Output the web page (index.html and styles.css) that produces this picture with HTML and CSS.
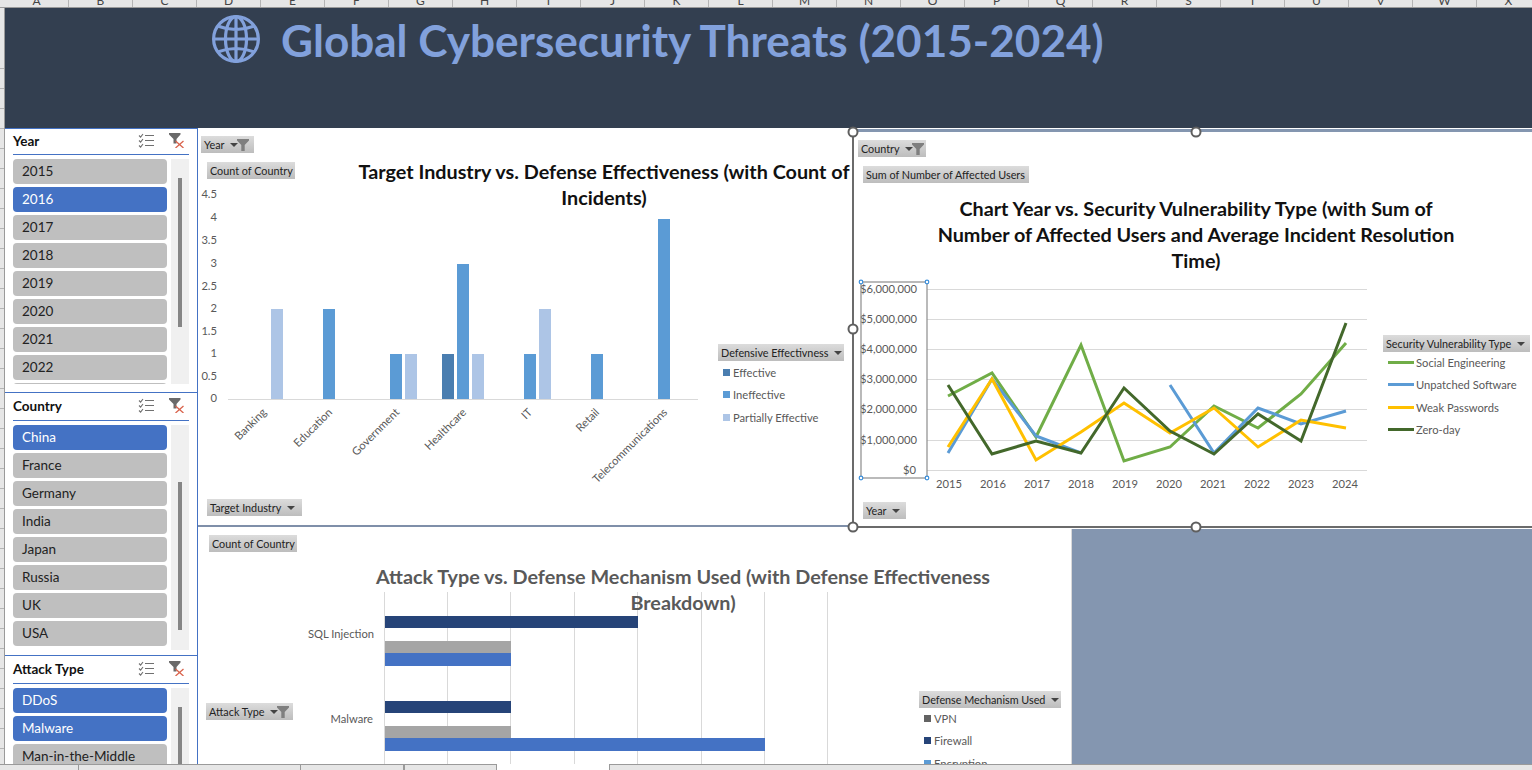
FILE: index.html
```html
<!DOCTYPE html>
<html lang="en">
<head>
    <meta charset="UTF-8">
    <meta name="viewport" content="width=device-width, initial-scale=1.0">
    <title>Global Cybersecurity Threats (2015-2024)</title>
    <link rel="stylesheet" href="styles.css">
</head>
<body>
    <svg class="defs" width="0" height="0">
        <symbol id="ic-multi" viewBox="0 0 16 15">
            <path d="M1 2.500l1.600 1.600L5 1M1 7.500l1.600 1.600L5 6M1 12.500l1.600 1.600L5 11" fill="none" stroke="#707070" stroke-width="1.100"/>
            <path d="M7 2.500h9M7 7.500h9M7 12.500h9" fill="none" stroke="#707070" stroke-width="1"/>
        </symbol>
        <symbol id="ic-clear" viewBox="0 0 16 15">
            <path d="M0 0h11.500v1.500L7.500 6v4.500H4.500V6L0 1.500z" fill="#6a6a6a"/>
            <path d="M6.500 8l8 7M14.500 8l-8 7" fill="none" stroke="#d9634c" stroke-width="1.300"/>
        </symbol>
        <symbol id="ic-funnel" viewBox="0 0 12 12">
            <path d="M0 0h12v1.500L7.700 6v6H4.300V6L0 1.500z" fill="#7f7f7f"/>
        </symbol>
    </svg>

    <div class="col-head">
        <span>A</span><span>B</span><span>C</span><span>D</span><span>E</span><span>F</span>
        <span>G</span><span>H</span><span>I</span><span>J</span><span>K</span><span>L</span>
        <span>M</span><span>N</span><span>O</span><span>P</span><span>Q</span><span>R</span>
        <span>S</span><span>T</span><span>U</span><span>V</span><span>W</span><span>X</span>
    </div>

    <div class="sheet">
        <div class="row-head">
            <div class="row-first"></div>
            <div class="row-rest"></div>
        </div>
        <div class="main">
            <header class="banner">
                <svg class="globe" viewBox="0 0 48 48" width="48" height="48">
                    <g fill="none" stroke="#82a1dc" stroke-width="3.200">
                        <circle cx="24" cy="24" r="22.400"/>
                        <ellipse cx="24" cy="24" rx="10.500" ry="22.400"/>
                        <path d="M24 1.500v45M1.500 24h45M5.500 11Q24 18 42.500 11M5.500 37Q24 30 42.500 37"/>
                    </g>
                </svg>
                <h1>Global Cybersecurity Threats (2015-2024)</h1>
            </header>

            <div class="dash">
                <aside class="sidebar">
                    <section class="slicer slicer-year">
                        <div class="slicer-head">
                            <h2>Year</h2>
                            <svg class="ic"><use href="#ic-multi"/></svg>
                            <svg class="ic"><use href="#ic-clear"/></svg>
                        </div>
                        <div class="slicer-body">
                            <ul class="items">
                                <li>2015</li>
                                <li class="on">2016</li>
                                <li>2017</li>
                                <li>2018</li>
                                <li>2019</li>
                                <li>2020</li>
                                <li>2021</li>
                                <li>2022</li>
                                <li></li>
                            </ul>
                            <div class="track"><div class="thumb thumb-year"></div></div>
                        </div>
                    </section>
                    <section class="slicer slicer-country">
                        <div class="slicer-head head-tall">
                            <h2>Country</h2>
                            <svg class="ic"><use href="#ic-multi"/></svg>
                            <svg class="ic"><use href="#ic-clear"/></svg>
                        </div>
                        <div class="slicer-body">
                            <ul class="items">
                                <li class="on">China</li>
                                <li>France</li>
                                <li>Germany</li>
                                <li>India</li>
                                <li>Japan</li>
                                <li>Russia</li>
                                <li>UK</li>
                                <li>USA</li>
                            </ul>
                            <div class="track"><div class="thumb thumb-country"></div></div>
                        </div>
                    </section>
                    <section class="slicer slicer-last">
                        <div class="slicer-head head-tall">
                            <h2>Attack Type</h2>
                            <svg class="ic"><use href="#ic-multi"/></svg>
                            <svg class="ic"><use href="#ic-clear"/></svg>
                        </div>
                        <div class="slicer-body">
                            <ul class="items">
                                <li class="on">DDoS</li>
                                <li class="on">Malware</li>
                                <li>Man-in-the-Middle</li>
                            </ul>
                            <div class="track"><div class="thumb thumb-attack"></div></div>
                        </div>
                    </section>
                </aside>

                <div class="charts">
                    <div class="charts-top">
                        <!-- bar chart -->
                        <section class="chart chart-industry">
                            <svg class="plot" viewBox="198 128 655 399" width="655" height="399">
                                <g class="lbl" text-anchor="end">
                                    <text x="217" y="198">4.5</text>
                                    <text x="217" y="221">4</text>
                                    <text x="217" y="244">3.5</text>
                                    <text x="217" y="267">3</text>
                                    <text x="217" y="290">2.5</text>
                                    <text x="217" y="312">2</text>
                                    <text x="217" y="335">1.5</text>
                                    <text x="217" y="357">1</text>
                                    <text x="217" y="380">0.5</text>
                                    <text x="217" y="402">0</text>
                                </g>
                                <path d="M228 399.500h470" stroke="#d9d9d9"/>
                                <g fill="#adc5e6">
                                    <rect x="271" y="309" width="12" height="90"/>
                                    <rect x="405" y="354" width="12" height="45"/>
                                    <rect x="472" y="354" width="12" height="45"/>
                                    <rect x="539" y="309" width="12" height="90"/>
                                </g>
                                <g fill="#5b9bd5">
                                    <rect x="323" y="309" width="12" height="90"/>
                                    <rect x="390" y="354" width="12" height="45"/>
                                    <rect x="457" y="264" width="12" height="135"/>
                                    <rect x="524" y="354" width="12" height="45"/>
                                    <rect x="591" y="354" width="12" height="45"/>
                                    <rect x="658" y="219" width="12" height="180"/>
                                </g>
                                <rect x="442" y="354" width="12" height="45" fill="#4a7eb0"/>
                                <g class="lbl" text-anchor="end">
                                    <text transform="translate(267 413) rotate(-45)">Banking</text>
                                    <text transform="translate(333 413) rotate(-45)">Education</text>
                                    <text transform="translate(400 413) rotate(-45)">Government</text>
                                    <text transform="translate(467 413) rotate(-45)">Healthcare</text>
                                    <text transform="translate(533 413) rotate(-45)">IT</text>
                                    <text transform="translate(600 413) rotate(-45)">Retail</text>
                                    <text transform="translate(668 413) rotate(-45)">Telecommunications</text>
                                </g>
                            </svg>
                            <h3 class="chart-title title-industry">Target Industry vs. Defense Effectiveness (with Count of<br>Incidents)</h3>
                            <div class="pivot pv-year1">Year <span class="caret"></span><svg class="funnel"><use href="#ic-funnel"/></svg></div>
                            <div class="pivot pv-count1">Count of Country</div>
                            <div class="pivot pv-industry">Target Industry <span class="caret"></span></div>
                            <div class="pivot pv-effect">Defensive Effectivness <span class="caret"></span></div>
                            <ul class="legend legend-effect">
                                <li><i class="swatch c-effective"></i>Effective</li>
                                <li><i class="swatch c-ineffective"></i>Ineffective</li>
                                <li><i class="swatch c-partial"></i>Partially Effective</li>
                            </ul>
                        </section>

                        <!-- line chart -->
                        <section class="chart chart-year">
                            <svg class="plot" viewBox="853 128 679 399" width="679" height="399">
                                <path d="M927 289.500h440M927 319.500h440M927 349.500h440M927 379.500h440M927 409.500h440M927 440.500h440M927 470.500h440" stroke="#d9d9d9"/>
                                <g class="lbl" text-anchor="end">
                                    <text x="917" y="293">$6,000,000</text>
                                    <text x="917" y="323">$5,000,000</text>
                                    <text x="917" y="353">$4,000,000</text>
                                    <text x="917" y="383">$3,000,000</text>
                                    <text x="917" y="413">$2,000,000</text>
                                    <text x="917" y="444">$1,000,000</text>
                                    <text x="916" y="474">$0</text>
                                </g>
                                <g class="lbl" text-anchor="middle">
                                    <text x="949" y="488">2015</text>
                                    <text x="993" y="488">2016</text>
                                    <text x="1037" y="488">2017</text>
                                    <text x="1081" y="488">2018</text>
                                    <text x="1125" y="488">2019</text>
                                    <text x="1169" y="488">2020</text>
                                    <text x="1213" y="488">2021</text>
                                    <text x="1257" y="488">2022</text>
                                    <text x="1301" y="488">2023</text>
                                    <text x="1345" y="488">2024</text>
                                </g>
                                <g fill="none" stroke-width="3">
                                    <polyline stroke="#70ad47" points="948,396 992,373 1036,437 1081,345 1124,461 1170,447 1214,406 1258,428 1301,394 1346,343"/>
                                    <polyline stroke="#5b9bd5" points="948,453 992,379 1036,436 1081,453"/>
                                    <polyline stroke="#5b9bd5" points="1170,385 1214,453 1258,408 1301,424 1346,411"/>
                                    <polyline stroke="#ffc000" points="948,447 992,379 1036,460 1081,432 1124,403 1170,433 1214,408 1258,447 1301,420 1346,428"/>
                                    <polyline stroke="#43682b" points="948,385 992,454 1036,441 1081,453 1124,388 1170,431 1214,454 1258,414 1301,441 1346,323"/>
                                </g>
                                <rect x="861" y="282" width="66" height="196" fill="none" stroke="#8c8c8c" stroke-width="1.200"/>
                                <g fill="#fff" stroke="#3b8fdc" stroke-width="1.200">
                                    <circle cx="861" cy="282" r="1.800"/>
                                    <circle cx="927" cy="282" r="1.800"/>
                                    <circle cx="861" cy="478" r="1.800"/>
                                    <circle cx="927" cy="478" r="1.800"/>
                                </g>
                            </svg>
                            <h3 class="chart-title title-year">Chart Year vs. Security Vulnerability Type (with Sum of<br>Number of Affected Users and Average Incident Resolution<br>Time)</h3>
                            <div class="pivot pv-country">Country <span class="caret"></span><svg class="funnel"><use href="#ic-funnel"/></svg></div>
                            <div class="pivot pv-sum">Sum of Number of Affected Users</div>
                            <div class="pivot pv-vuln">Security Vulnerability Type <span class="caret"></span></div>
                            <div class="pivot pv-year2">Year <span class="caret"></span></div>
                            <ul class="legend legend-vuln">
                                <li><i class="dash-key c-social"></i>Social Engineering</li>
                                <li><i class="dash-key c-unpatched"></i>Unpatched Software</li>
                                <li><i class="dash-key c-weak"></i>Weak Passwords</li>
                                <li><i class="dash-key c-zero"></i>Zero-day</li>
                            </ul>
                            <span class="handle h-top-left"></span>
                            <span class="handle h-top-mid"></span>
                            <span class="handle h-mid-left"></span>
                            <span class="handle h-bot-left"></span>
                            <span class="handle h-bot-mid"></span>
                        </section>
                    </div>

                    <div class="charts-bottom">
                        <!-- horizontal bars -->
                        <section class="chart chart-attack">
                            <svg class="plot" viewBox="198 527 873 237" width="873" height="237">
                                <path d="M384.500 592v172M447.500 592v172M510.500 592v172M574.500 592v172M637.500 592v172M701.500 592v172M764.500 592v172M827.500 592v172" stroke="#d9d9d9"/>
                                <rect x="385" y="616" width="253" height="12" fill="#264478"/>
                                <rect x="385" y="641" width="126" height="12" fill="#a5a5a5"/>
                                <rect x="385" y="653" width="126" height="13" fill="#4472c4"/>
                                <rect x="385" y="701" width="126" height="12" fill="#264478"/>
                                <rect x="385" y="726" width="126" height="12" fill="#a5a5a5"/>
                                <rect x="385" y="738" width="380" height="13" fill="#4472c4"/>
                                <g class="lbl" text-anchor="end">
                                    <text x="374" y="638">SQL Injection</text>
                                    <text x="373" y="723">Malware</text>
                                </g>
                            </svg>
                            <h3 class="chart-title title-attack">Attack Type vs. Defense Mechanism Used (with Defense Effectiveness<br>Breakdown)</h3>
                            <div class="pivot pv-count3">Count of Country</div>
                            <div class="pivot pv-attack">Attack Type <span class="caret"></span><svg class="funnel"><use href="#ic-funnel"/></svg></div>
                            <div class="pivot pv-mech">Defense Mechanism Used <span class="caret"></span></div>
                            <ul class="legend legend-mech">
                                <li><i class="swatch c-vpn"></i>VPN</li>
                                <li><i class="swatch c-firewall"></i>Firewall</li>
                                <li><i class="swatch c-encryption"></i>Encryption</li>
                            </ul>
                        </section>
                        <div class="filler"></div>
                    </div>
                </div>
            </div>
        </div>
    </div>

    <div class="tabbar">
        <div class="tabs-left">
            <span class="tab tab-a"></span>
            <span class="tab tab-b"></span>
            <span class="tab tab-c"></span>
            <span class="tab tab-d"></span>
        </div>
        <div class="tab-active"></div>
        <div class="tabs-right"></div>
    </div>
</body>
</html>
```

FILE: styles.css
```css
* {
    box-sizing: border-box;
}
html, body {
    margin: 0;
    height: 100%;
}
body {
    width: 1532px;
    height: 770px;
    display: flex;
    flex-direction: column;
    overflow: hidden;
    background-color: #fff;
    font-family: 'Lato', 'Liberation Sans', sans-serif;
}
ul {
    list-style: none;
    margin: 0;
    padding: 0;
}
h1, h2, h3 {
    margin: 0;
}
.defs {
    position: absolute;
}

/* excel frame */
.col-head {
    flex: none;
    height: 8px;
    padding-left: 5px;
    display: flex;
    overflow: hidden;
    background-color: #e6e6e6;
    border-bottom: 1px solid #9a9a9a;
}
.col-head span {
    flex: none;
    width: 64px;
    height: 7px;
    overflow: hidden;
    line-height: 2px;
    font-size: 12px;
    text-align: center;
    color: #444;
    border-right: 1px solid #b5b5b5;
}
.sheet {
    flex: 1;
    min-height: 0;
    display: flex;
}
.row-head {
    flex: none;
    width: 5px;
    display: flex;
    flex-direction: column;
    border-right: 1px solid #9a9a9a;
    background-color: #e6e6e6;
}
.row-first {
    flex: none;
    height: 61px;
    border-bottom: 1px solid #b5b5b5;
}
.row-rest {
    flex: 1;
    background-image: repeating-linear-gradient(to bottom, #e6e6e6 0, #e6e6e6 19px, #b5b5b5 19px, #b5b5b5 20px);
}
.main {
    flex: 1;
    min-width: 0;
    display: flex;
    flex-direction: column;
}
.tabbar {
    flex: none;
    height: 6px;
    display: flex;
    background-color: #e6e6e6;
}
.tabs-left {
    flex: none;
    width: 497px;
    display: flex;
    border-top: 1px solid #9a9a9a;
    border-right: 1px solid #9a9a9a;
}
.tab {
    height: 100%;
    border-right: 1px solid #9a9a9a;
}
.tab-a { width: 79px; }
.tab-b { width: 222px; }
.tab-c { width: 103px; }
.tab-active {
    flex: none;
    width: 112px;
    background-color: #fff;
}
.tabs-right {
    flex: 1;
    border-top: 1px solid #9a9a9a;
    border-left: 1px solid #9a9a9a;
}

/* banner */
.banner {
    flex: none;
    height: 120px;
    padding: 7px 0 0 207px;
    display: flex;
    align-items: flex-start;
    gap: 21px;
    background-color: #333f50;
}
.globe {
    flex: none;
}
.banner h1 {
    margin-top: -1px;
    font-size: 44.100px;
    line-height: 52px;
    font-weight: 700;
    white-space: nowrap;
    color: #82a1dc;
}

.dash {
    flex: 1;
    min-height: 0;
    display: flex;
}

/* slicers */
.sidebar {
    flex: none;
    width: 193px;
    display: flex;
    flex-direction: column;
    overflow: hidden;
    border-right: 1px solid #4472c4;
    background-color: #fff;
}
.slicer {
    padding: 0 8px;
    border-top: 1px solid #4472c4;
}
.slicer-year {
    flex: none;
    height: 264px;
}
.slicer-country {
    flex: none;
    height: 263px;
}
.slicer-last {
    flex: 1;
    min-height: 0;
    overflow: hidden;
}
.slicer-head {
    height: 26px;
    padding: 0 4px 2px 0;
    display: flex;
    align-items: center;
    border-bottom: 1px solid #4472c4;
}
.head-tall {
    height: 28px;
}
.slicer-head h2 {
    flex: 1;
    font-size: 13.500px;
    font-weight: 700;
    color: #111;
}
.ic {
    flex: none;
    width: 16px;
    height: 15px;
    margin-left: 15px;
}
.slicer-head h2 + .ic {
    margin-left: 0;
}
.slicer-body {
    margin-top: 4px;
    height: 225px;
    display: flex;
    gap: 4px;
    overflow: hidden;
}
.items {
    flex: none;
    width: 154px;
    display: flex;
    flex-direction: column;
    gap: 3px;
}
.items li {
    flex: none;
    height: 25px;
    padding-left: 9px;
    line-height: 25px;
    font-size: 13.500px;
    color: #222;
    background-color: #bfbfbf;
    border-radius: 4px;
}
.items li.on {
    color: #fff;
    background-color: #4472c4;
}
.track {
    flex: none;
    width: 18px;
    background-color: #f0f0f0;
    display: flex;
    justify-content: center;
}
.thumb {
    width: 4px;
    background-color: #868686;
}
.thumb-year {
    height: 149px;
    margin-top: 19px;
}
.thumb-country {
    height: 148px;
    margin-top: 57px;
}
.thumb-attack {
    height: 149px;
    margin-top: 19px;
}

/* charts */
.charts {
    flex: 1;
    min-width: 0;
    display: flex;
    flex-direction: column;
}
.charts-top {
    flex: none;
    height: 399px;
    display: flex;
}
.charts-bottom {
    flex: 1;
    min-height: 0;
    display: flex;
}
.chart {
    position: relative;
    flex: none;
    background-color: #fff;
}
.plot {
    position: absolute;
    left: 0;
    top: 0;
}
.lbl {
    font-size: 11.200px;
    fill: #595959;
}
.chart-industry {
    width: 655px;
    border-bottom: 2px solid #7f8fa9;
}
.chart-year {
    width: 679px;
    z-index: 2;
}
.chart-year::before {
    content: "";
    position: absolute;
    left: 0;
    right: 0;
    top: 1px;
    height: 3px;
    background-color: #8496b0;
}
.chart-year::after {
    content: "";
    position: absolute;
    inset: 4px 0 -1px -1px;
    border-left: 2px solid #6b6b6b;
    border-bottom: 2px solid #6b6b6b;
    pointer-events: none;
}
.chart-attack {
    width: 873px;
    overflow: hidden;
}
.filler {
    flex: 1;
    margin-top: 2px;
    background-color: #8496b0;
    border-left: 1px solid #d9d9d9;
}
.chart-title {
    position: absolute;
    font-size: 19.800px;
    line-height: 26px;
    font-weight: 700;
    text-align: center;
    white-space: nowrap;
    color: #111;
    transform: translateX(-50%);
}
.title-industry {
    left: 406px;
    top: 30px;
}
.title-year {
    left: 343px;
    top: 67px;
}
.title-attack {
    left: 485px;
    top: 36px;
    color: #595959;
}

/* pivot field buttons */
.pivot {
    position: absolute;
    height: 17px;
    padding-left: 3px;
    display: flex;
    align-items: center;
    white-space: pre;
    font-size: 10.800px;
    color: #222;
    background-image: linear-gradient(to bottom, #dcdcdc, #bdbdbd);
}
.caret {
    width: 0;
    height: 0;
    margin-left: 3px;
    border-left: 4px solid transparent;
    border-right: 4px solid transparent;
    border-top: 4px solid #444;
}
.funnel {
    width: 12px;
    height: 12px;
    margin-left: -1px;
}
.pv-year1 { left: 3px; top: 8px; width: 53px; }
.pv-count1 { left: 9px; top: 34px; width: 88px; }
.pv-industry { left: 9px; top: 371px; width: 95px; }
.pv-effect { left: 520px; top: 216px; width: 126px; }
.pv-country { left: 5px; top: 12px; width: 68px; }
.pv-sum { left: 10px; top: 38px; width: 166px; }
.pv-vuln { left: 530px; top: 207px; width: 147px; }
.pv-year2 { left: 10px; top: 374px; width: 43px; }
.pv-count3 { left: 11px; top: 8px; width: 88px; }
.pv-attack { left: 8px; top: 176px; width: 87px; }
.pv-mech { left: 721px; top: 164px; width: 142px; }

/* legends */
.legend {
    position: absolute;
    display: flex;
    flex-direction: column;
    white-space: nowrap;
    font-size: 11.200px;
    color: #595959;
}
.legend li {
    display: flex;
    align-items: center;
    gap: 3px;
    height: 14.500px;
}
.legend-effect {
    left: 525px;
    top: 237px;
    gap: 8px;
}
.legend-vuln {
    left: 535px;
    top: 227px;
    gap: 8px;
}
.legend-vuln li {
    gap: 2px;
}
.legend-mech {
    left: 726px;
    top: 184px;
    gap: 8px;
}
.swatch {
    flex: none;
    width: 7px;
    height: 7px;
}
.dash-key {
    flex: none;
    width: 26px;
    height: 3px;
}
.c-effective { background-color: #4a7eb0; }
.c-ineffective { background-color: #5b9bd5; }
.c-partial { background-color: #adc5e6; }
.c-social { background-color: #70ad47; }
.c-unpatched { background-color: #5b9bd5; }
.c-weak { background-color: #ffc000; }
.c-zero { background-color: #43682b; }
.c-vpn { background-color: #636363; }
.c-firewall { background-color: #264478; }
.c-encryption { background-color: #5b9bd5; }

/* selection handles */
.handle {
    position: absolute;
    width: 11px;
    height: 11px;
    background-color: #fff;
    border: 2px solid #5f5f5f;
    border-radius: 50%;
    transform: translate(-50%, -50%);
    z-index: 3;
}
.h-top-left { left: 0; top: 4px; }
.h-top-mid { left: 343px; top: 4px; }
.h-mid-left { left: 0; top: 201px; }
.h-bot-left { left: 0; top: 399px; }
.h-bot-mid { left: 343px; top: 399px; }
```
